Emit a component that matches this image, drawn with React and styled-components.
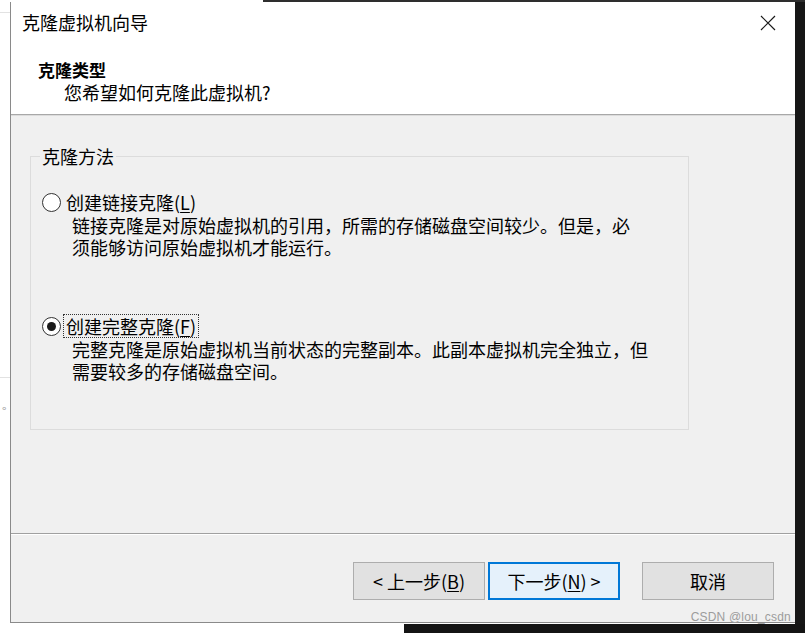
import React from 'react';
import styled, { createGlobalStyle } from 'styled-components';

const GlobalStyle = createGlobalStyle`
  html, body {
    margin: 0;
    padding: 0;
    background: #ffffff;
    overflow: hidden;
  }
  * {
    box-sizing: border-box;
  }
`;

const FONT = `"Noto Sans CJK SC", "Noto Sans", sans-serif`;

const Page = styled.div`
  position: relative;
  width: 805px;
  height: 633px;
  display: flex;
  font-family: ${FONT};
  color: #000;
  background:
    linear-gradient(#2e2e2e, #2e2e2e) 263px 0 / 542px 2px no-repeat,
    linear-gradient(#141414, #141414) 404px 624px / 401px 9px no-repeat,
    linear-gradient(to right, #ffffff 0 795px, #161616 795px);
`;

const LeftStrip = styled.div`
  width: 10px;
  flex: none;
  padding-top: 404px;
  font-size: 12px;
  line-height: 14px;
  color: #9a9a9a;
  background:
    linear-gradient(#e2e2e2, #e2e2e2) 0 12px / 10px 1px no-repeat,
    linear-gradient(#e2e2e2, #e2e2e2) 0 377px / 10px 1px no-repeat;
  & > span {
    display: block;
    padding-left: 2px;
  }
`;

const Dialog = styled.div`
  width: 785px;
  height: 621px;
  margin-top: 2px;
  display: flex;
  flex-direction: column;
  border-left: 1px solid #8a8a8a;
  border-bottom: 1px solid #8a8a8a;
  background: #f0f0f0;
`;

const Header = styled.div`
  background: #ffffff;
  border-bottom: 1px solid #a8a8a8;
  box-shadow: 0 1px 0 #dcdcdc;
  flex: none;
`;

const TitleBar = styled.div`
  height: 39px;
  display: flex;
  align-items: center;
  justify-content: space-between;
  padding: 0 17px 0 11px;
`;

const Title = styled.div`
  font-size: 18px;
  line-height: 22px;
`;

const CloseButton = styled.div`
  width: 20px;
  height: 20px;
  margin-top: 3px;
  display: flex;
  align-items: center;
  justify-content: center;
`;

const HeadingBlock = styled.div`
  padding: 18px 0 10px 27px;
`;

const Heading = styled.div`
  font-size: 17px;
  font-weight: bold;
  line-height: 22px;
`;

const SubHeading = styled.div`
  font-size: 18px;
  line-height: 23px;
  padding-left: 26px;
`;

const Body = styled.div`
  height: 419px;
  flex: none;
  padding: 30px 0 0 19px;
  border-bottom: 1px solid #a0a0a0;
`;

const GroupBox = styled.fieldset`
  width: 659px;
  height: 285px;
  margin: 0;
  padding: 23px 0 0 11px;
  border: 1px solid #dcdcdc;
`;

const Legend = styled.legend`
  font-size: 18px;
  line-height: 22px;
  margin-left: -2px;
  padding: 0 2px;
`;

const Option = styled.div`
  margin-bottom: ${p => p.$gap || 0}px;
`;

const OptionRow = styled.div`
  display: flex;
  align-items: center;
  gap: 2px;
  height: 24px;
`;

const Radio = styled.span`
  width: 19px;
  height: 19px;
  flex: none;
  border-radius: 50%;
  border: 1px solid #333333;
  background: #ffffff;
  display: flex;
  align-items: center;
  justify-content: center;
  &::after {
    content: '';
    width: 9px;
    height: 9px;
    border-radius: 50%;
    background: ${p => (p.$checked ? '#1a1a1a' : 'transparent')};
  }
`;

const OptionLabel = styled.span`
  font-size: 18px;
  line-height: 22px;
  padding: 0 2px;
  border: 1px dotted ${p => (p.$focused ? '#333333' : 'transparent')};
  & u {
    text-decoration: underline;
    text-underline-offset: 2px;
  }
`;

const Description = styled.div`
  font-size: 18px;
  line-height: 22px;
  padding-left: 30px;
  white-space: pre-line;
`;

const Footer = styled.div`
  flex: 1;
  border-top: 1px solid #ffffff;
  display: flex;
  justify-content: flex-end;
  align-items: flex-start;
  padding: 27px 21px 0 0;
`;

const ButtonGroup = styled.div`
  display: flex;
  gap: 3px;
  margin-right: 22px;
`;

const Button = styled.div`
  width: 132px;
  height: 38px;
  display: flex;
  align-items: center;
  justify-content: center;
  font-size: 18px;
  line-height: 22px;
  background: ${p => (p.$primary ? '#e5f1fb' : '#e1e1e1')};
  border: ${p => (p.$primary ? '2px solid #0078d7' : '1px solid #adadad')};
  & u {
    text-decoration: underline;
    text-underline-offset: 2px;
  }
`;

const Watermark = styled.div`
  position: absolute;
  right: 14px;
  bottom: 9px;
  font-family: "Liberation Sans", Arial, sans-serif;
  font-size: 12px;
  color: #9c9c9c;
  letter-spacing: 0.2px;
`;

function CloseIcon() {
  return (
    <svg width="16" height="16" viewBox="0 0 16 16">
      <path d="M1 1 L15 15 M15 1 L1 15" stroke="#1a1a1a" strokeWidth="1.2" fill="none" />
    </svg>
  );
}

export default function App() {
  return (
    <Page>
      <GlobalStyle />
      <LeftStrip>
        <span>°</span>
      </LeftStrip>
      <Dialog>
        <Header>
          <TitleBar>
            <Title>克隆虚拟机向导</Title>
            <CloseButton>
              <CloseIcon />
            </CloseButton>
          </TitleBar>
          <HeadingBlock>
            <Heading>克隆类型</Heading>
            <SubHeading>您希望如何克隆此虚拟机?</SubHeading>
          </HeadingBlock>
        </Header>
        <Body>
          <GroupBox>
            <Legend>克隆方法</Legend>
            <Option $gap={56}>
              <OptionRow>
                <Radio />
                <OptionLabel>创建链接克隆(<u>L</u>)</OptionLabel>
              </OptionRow>
              <Description>
                {'链接克隆是对原始虚拟机的引用，所需的存储磁盘空间较少。但是，必\n须能够访问原始虚拟机才能运行。'}
              </Description>
            </Option>
            <Option>
              <OptionRow>
                <Radio $checked />
                <OptionLabel $focused>创建完整克隆(<u>F</u>)</OptionLabel>
              </OptionRow>
              <Description>
                {'完整克隆是原始虚拟机当前状态的完整副本。此副本虚拟机完全独立，但\n需要较多的存储磁盘空间。'}
              </Description>
            </Option>
          </GroupBox>
        </Body>
        <Footer>
          <ButtonGroup>
            <Button>&lt; 上一步(<u>B</u>)</Button>
            <Button $primary>下一步(<u>N</u>) &gt;</Button>
          </ButtonGroup>
          <Button>取消</Button>
        </Footer>
      </Dialog>
      <Watermark>CSDN @lou_csdn</Watermark>
    </Page>
  );
}
